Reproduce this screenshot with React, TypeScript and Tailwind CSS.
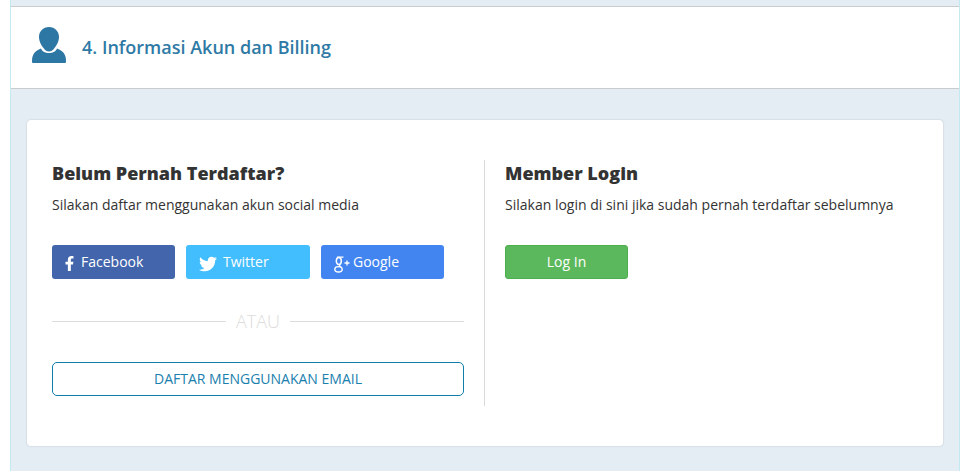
import { FaFacebookF, FaTwitter } from "react-icons/fa";

function Social({ bg, icon, label, width }: { bg: string; icon: React.ReactNode; label: string; width: string }) {
  return (
    <div className={`flex h-[34px] items-center rounded-[3px] text-[14px] text-white ${bg} ${width}`}>
      {icon}
      <span className="mb-[2px]">{label}</span>
    </div>
  );
}

function GooglePlusIcon() {
  return (
    <svg width="16" height="17" viewBox="0 0 16 17" className="mt-[4px] mr-[3px] ml-[13px] shrink-0" fill="none" stroke="#ffffff">
      <ellipse cx="4.800" cy="5" rx="2.500" ry="3.500" strokeWidth="1.500" />
      <ellipse cx="4.500" cy="13.300" rx="3.700" ry="2.700" strokeWidth="1.400" />
      <path d="M3 1.200H9.500M6 8.500C5 9.500 5.500 10 6.800 11" strokeWidth="1.300" />
      <path d="M10.500 7H15.500M13 4.500V9.500" strokeWidth="1.300" />
    </svg>
  );
}

export default function App() {
  return (
    <div className="h-[471px] w-[975px] overflow-hidden bg-white font-['Open_Sans',sans-serif]">
      <div className="ml-[10px] flex h-[471px] w-[950px] flex-col border-x border-[#c3e9f1] bg-[#e5edf4]">
        <div className="h-[6px]" />
        <div className="flex h-[83px] items-center border-y border-[#c9cccd] bg-white pl-[21px]">
          <svg width="34" height="36" viewBox="0 0 34 36" className="mt-[-5px] shrink-0">
            <path
              fill="#2c77a3"
              d="M17 0C23 0 27 4.500 27 10C27 15 24 19 22.500 21C21 23.500 19 24.500 17 24.500C15 24.500 13 23.500 11.500 21C10 19 7 15 7 10C7 4.500 11 0 17 0Z"
            />
            <path
              fill="#2c77a3"
              d="M0 34C0 27 3 24 9 21.500C10.500 25 13.500 26 17 26C20.500 26 23.500 25 25 21.500C31 24 34 27 34 34V35Q34 36 33 36H1Q0 36 0 35Z"
            />
          </svg>
          <h2 className="ml-[16px] text-[18px] font-semibold text-[#2e7aa5]">4. Informasi Akun dan Billing</h2>
        </div>
        <div className="mx-[16px] mt-[31px] flex h-[326px] w-[916px] rounded-[4px] bg-white pt-[40px] pl-[25px] shadow-[0_0_2px_rgba(0,0,0,0.2)]">
          <div className="h-[246px] w-[433px] border-r border-[#d9d9d9] pr-[20px]">
            <h3 className="text-[18px] leading-[26px] font-extrabold text-[#333333]">Belum Pernah Terdaftar?</h3>
            <p className="mt-[9px] text-[14px] leading-[20px] text-[#333333]">Silakan daftar menggunakan akun social media</p>
            <div className="mt-[30px] flex gap-[11px]">
              <Social
                bg="bg-[#4265ab]"
                width="w-[123px]"
                label="Facebook"
                icon={<FaFacebookF className="mr-[4px] ml-[10px] mt-[3px] text-[15px]" />}
              />
              <Social
                bg="bg-[#42bdfd]"
                width="w-[124px]"
                label="Twitter"
                icon={<FaTwitter className="mr-[6px] ml-[13px] mt-[3px] text-[18px]" />}
              />
              <Social bg="bg-[#4285f0]" width="w-[123px]" label="Google" icon={<GooglePlusIcon />} />
            </div>
            <div className="mt-[31px] flex items-center gap-[10px]">
              <div className="h-px flex-1 bg-[#dcdcdc]" />
              <span className="text-[18px] leading-[22px] font-light text-[#dcdcdc]">ATAU</span>
              <div className="h-px flex-1 bg-[#dcdcdc]" />
            </div>
            <div className="mt-[30px] flex h-[34px] items-center justify-center rounded-[5px] border border-[#0f7eaa] text-[14px] text-[#1a80ad]">
              <span className="mb-[2px]">DAFTAR MENGGUNAKAN EMAIL</span>
            </div>
          </div>
          <div className="pl-[20px]">
            <h3 className="text-[18px] leading-[26px] font-extrabold text-[#333333]">Member Login</h3>
            <p className="mt-[9px] text-[14px] leading-[20px] text-[#333333]">Silakan login di sini jika sudah pernah terdaftar sebelumnya</p>
            <div className="mt-[30px] flex h-[34px] w-[123px] items-center justify-center rounded-[3px] border border-[#4cae4c] bg-[#5cb85c] text-[14px] text-white">
              <span className="mb-[2px]">Log In</span>
            </div>
          </div>
        </div>
      </div>
    </div>
  );
}
